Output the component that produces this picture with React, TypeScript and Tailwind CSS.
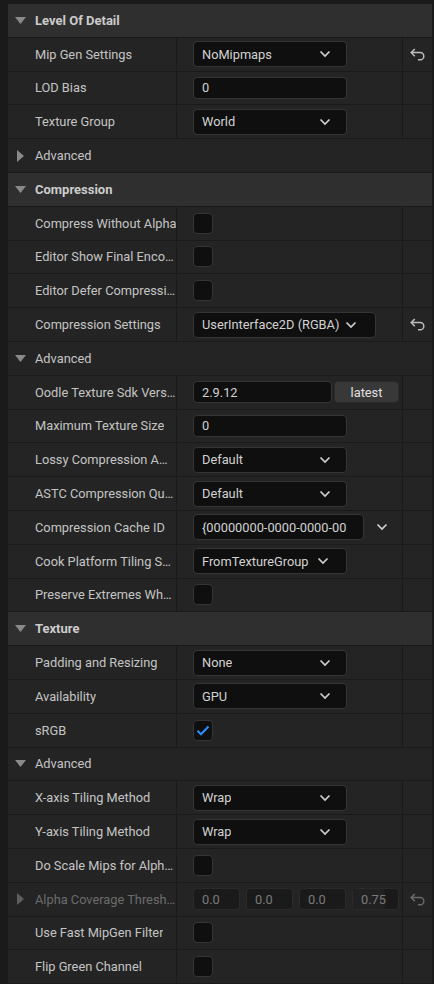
import React from "react";

const ROW = "h-[33.8px] shrink-0 border-b border-[#1a1a1a]";

function TriDown() {
  return (
    <svg width="11" height="7" viewBox="0 0 11 7" className="shrink-0">
      <path d="M0 0h11L5.5 7z" fill="#8a8a8a" />
    </svg>
  );
}

function TriRight({ dim }: { dim?: boolean }) {
  return (
    <svg width="7" height="12" viewBox="0 0 7 12" className="shrink-0">
      <path d="M0 0l7 6-7 6z" fill={dim ? "#5e5e5e" : "#8a8a8a"} />
    </svg>
  );
}

function Chevron() {
  return (
    <svg width="12" height="8" viewBox="0 0 12 8" className="shrink-0">
      <path d="M1.5 1.5 6 6l4.5-4.5" stroke="#cfcfcf" strokeWidth="1.7" fill="none" />
    </svg>
  );
}

function ResetIcon({ dim }: { dim?: boolean }) {
  return (
    <svg width="16" height="13" viewBox="0 0 16 13">
      <path
        d="M4.8 1 1.2 4.6l3.6 3.6M1.2 4.6h9a3.6 3.6 0 0 1 0 7.2H8"
        stroke={dim ? "#6a6a6a" : "#bdbdbd"}
        strokeWidth="1.5"
        fill="none"
      />
    </svg>
  );
}

function Category({ title }: { title: string }) {
  return (
    <div className={`${ROW} flex items-center bg-[#2f2f2f] pl-[7px]`}>
      <TriDown />
      <span className="ml-[9px] text-[13px] font-bold text-[#cccccc]">{title}</span>
    </div>
  );
}

function Group({ title, open }: { title: string; open?: boolean }) {
  return (
    <div className={`${ROW} flex items-center bg-[#242424] ${open ? "pl-[7px]" : "pl-[9px]"}`}>
      {open ? <TriDown /> : <TriRight />}
      <span className={`${open ? "ml-[9px]" : "ml-[11px]"} text-[12.8px] text-[#c4c4c4]`}>{title}</span>
    </div>
  );
}

function Prop({
  label,
  children,
  reset,
  dim,
  arrow,
  clip,
}: {
  label: string;
  children?: React.ReactNode;
  reset?: boolean;
  dim?: boolean;
  arrow?: boolean;
  clip?: boolean;
}) {
  return (
    <div className={`${ROW} flex bg-[#242424]`}>
      <div className="flex w-[169px] shrink-0 items-center overflow-hidden border-r border-[#1a1a1a] pl-[9px]">
        <span className="w-[18px] shrink-0">{arrow && <TriRight dim />}</span>
        <span
          className={`${clip ? "overflow-hidden whitespace-nowrap" : "truncate"} text-[12.8px] ${
            dim ? "text-[#6c6c6c]" : "text-[#c4c4c4]"
          }`}
        >
          {label}
        </span>
      </div>
      <div className="flex w-[226px] shrink-0 items-center border-r border-[#1a1a1a] pl-[16px]">
        {children}
      </div>
      <div className="flex flex-1 items-center justify-center pl-[1px]">
        {reset && <ResetIcon dim={dim} />}
      </div>
    </div>
  );
}

function Combo({ value, w }: { value: string; w: string }) {
  return (
    <div
      className={`${w} flex h-[26px] items-center justify-between rounded-[4px] border border-[#353535] bg-[#0f0f0f] pl-[8px] pr-[15px]`}
    >
      <span className="truncate text-[12.8px] text-[#d2d2d2]">{value}</span>
      <Chevron />
    </div>
  );
}

function Field({ value, w }: { value: string; w: string }) {
  return (
    <div
      className={`${w} flex h-[22px] items-center overflow-hidden rounded-[4px] border border-[#353535] bg-[#0f0f0f] pl-[8px]`}
    >
      <span className="whitespace-nowrap text-[12.8px] text-[#d2d2d2]">{value}</span>
    </div>
  );
}

function Check({ on }: { on?: boolean }) {
  return (
    <div className="flex h-[21px] w-[20px] items-center justify-center rounded-[4px] border border-[#353535] bg-[#0f0f0f]">
      {on && (
        <svg width="14" height="11" viewBox="0 0 14 11">
          <path d="M1.5 5.8 5 9.2 12.5 1.5" stroke="#2b8cff" strokeWidth="2.2" fill="none" />
        </svg>
      )}
    </div>
  );
}

function NumBox({ value, fill }: { value: string; fill?: boolean }) {
  return (
    <div className="relative flex h-[22px] w-[47px] shrink-0 items-center overflow-hidden rounded-[4px] border border-[#2a2a2a] bg-[#1a1a1a] pl-[8px]">
      {fill && <div className="absolute inset-y-0 left-0 w-[32px] rounded-r-[4px] bg-[#212121]" />}
      <span className="relative text-[12.8px] text-[#7a7a7a]">{value}</span>
    </div>
  );
}

export default function App() {
  return (
    <div className="h-[984px] w-[434px] overflow-hidden bg-[#1a1a1a] pl-[8px] pr-[2px] pt-[4px] font-['Roboto','Liberation_Sans',sans-serif]">
      <div className="flex flex-col">
        <Category title="Level Of Detail" />
        <Prop label="Mip Gen Settings" reset>
          <Combo value="NoMipmaps" w="w-[154px]" />
        </Prop>
        <Prop label="LOD Bias">
          <Field value="0" w="w-[154px]" />
        </Prop>
        <Prop label="Texture Group">
          <Combo value="World" w="w-[154px]" />
        </Prop>
        <Group title="Advanced" />

        <Category title="Compression" />
        <Prop label="Compress Without Alpha" clip>
          <Check />
        </Prop>
        <Prop label="Editor Show Final Encoded Texture">
          <Check />
        </Prop>
        <Prop label="Editor Defer Compression">
          <Check />
        </Prop>
        <Prop label="Compression Settings" reset>
          <div className="flex h-[26px] w-[183px] items-center rounded-[4px] border border-[#353535] bg-[#0f0f0f] pl-[8px] pr-[8px]">
            <span className="whitespace-nowrap text-[12.8px] text-[#d2d2d2]">UserInterface2D (RGBA)</span>
            <span className="ml-[6px]">
              <Chevron />
            </span>
          </div>
        </Prop>
        <Group title="Advanced" open />
        <Prop label="Oodle Texture Sdk Version">
          <Field value="2.9.12" w="w-[139px]" />
          <div className="ml-[2px] flex h-[22px] w-[65px] items-center justify-center rounded-[4px] border border-[#2a2a2a] bg-[#383838] text-[12.8px] text-[#e0e0e0]">
            latest
          </div>
        </Prop>
        <Prop label="Maximum Texture Size">
          <Field value="0" w="w-[154px]" />
        </Prop>
        <Prop label="Lossy Compression Amount">
          <Combo value="Default" w="w-[154px]" />
        </Prop>
        <Prop label="ASTC Compression Quality">
          <Combo value="Default" w="w-[154px]" />
        </Prop>
        <Prop label="Compression Cache ID">
          <div className="flex h-[26px] w-[171px] items-center rounded-[4px] border border-[#353535] bg-[#0f0f0f] pl-[8px]">
            <span className="w-[144px] overflow-hidden whitespace-nowrap text-[12.8px] text-[#d2d2d2]">
              {"{00000000-0000-0000-0000-000000000000}"}
            </span>
          </div>
          <span className="ml-[12px]">
            <Chevron />
          </span>
        </Prop>
        <Prop label="Cook Platform Tiling Settings">
          <div className="flex h-[26px] w-[154px] items-center rounded-[4px] border border-[#353535] bg-[#0f0f0f] pl-[8px] pr-[8px]">
            <span className="whitespace-nowrap text-[12.8px] text-[#d2d2d2]">FromTextureGroup</span>
            <span className="ml-[8px]">
              <Chevron />
            </span>
          </div>
        </Prop>
        <Prop label="Preserve Extremes When Downscaling">
          <Check />
        </Prop>

        <Category title="Texture" />
        <Prop label="Padding and Resizing">
          <Combo value="None" w="w-[154px]" />
        </Prop>
        <Prop label="Availability">
          <Combo value="GPU" w="w-[154px]" />
        </Prop>
        <Prop label="sRGB">
          <Check on />
        </Prop>
        <Group title="Advanced" open />
        <Prop label="X-axis Tiling Method">
          <Combo value="Wrap" w="w-[154px]" />
        </Prop>
        <Prop label="Y-axis Tiling Method">
          <Combo value="Wrap" w="w-[154px]" />
        </Prop>
        <Prop label="Do Scale Mips for Alpha Coverage">
          <Check />
        </Prop>
        <Prop label="Alpha Coverage Thresholds" dim arrow reset>
          <div className="flex gap-[6px]">
            <NumBox value="0.0" />
            <NumBox value="0.0" />
            <NumBox value="0.0" />
            <NumBox value="0.75" fill />
          </div>
        </Prop>
        <Prop label="Use Fast MipGen Filter">
          <Check />
        </Prop>
        <Prop label="Flip Green Channel">
          <Check />
        </Prop>
      </div>
    </div>
  );
}
